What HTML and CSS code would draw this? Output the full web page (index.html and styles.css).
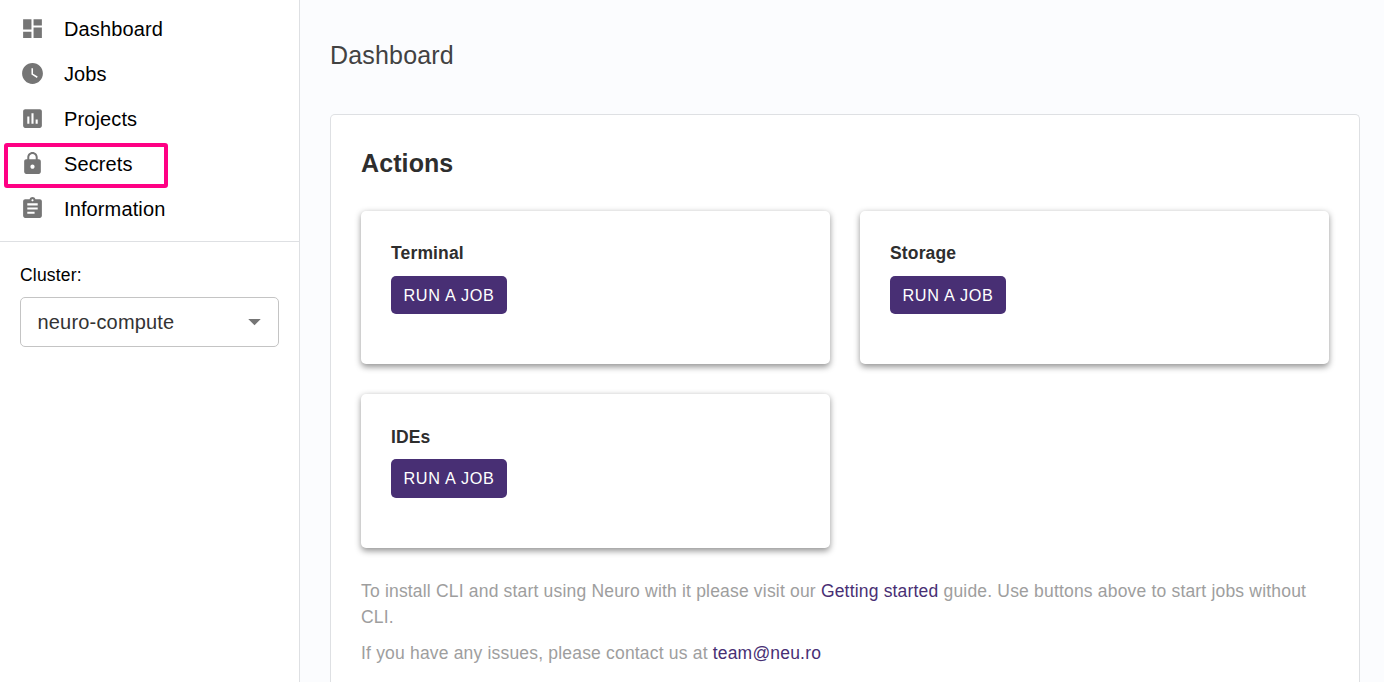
FILE: index.html
```html
<!DOCTYPE html>
<html lang="en">
<head>
<meta charset="utf-8">
<title>Dashboard</title>
<link rel="stylesheet" href="styles.css">
</head>
<body>
<div class="app">
  <aside class="sidebar">
    <nav class="nav">
      <a class="nav-item"><svg class="icon" viewBox="0 0 24 24"><path d="M3 13h8V3H3v10zm0 8h8v-6H3v6zm10 0h8V11h-8v10zm0-18v6h8V3h-8z"/></svg><span class="nav-text">Dashboard</span></a>
      <a class="nav-item"><svg class="icon" viewBox="0 0 24 24"><path d="M12 2C6.5 2 2 6.5 2 12s4.5 10 10 10 10-4.5 10-10S17.500 2 12 2zm4.200 14.200L11 13V7h1.500v5.200l4.500 2.700-.8 1.300z"/></svg><span class="nav-text">Jobs</span></a>
      <a class="nav-item"><svg class="icon" viewBox="0 0 24 24"><path d="M19 3H5c-1.100 0-2 .9-2 2v14c0 1.100.9 2 2 2h14c1.100 0 2-.9 2-2V5c0-1.100-.9-2-2-2zM9 17H7v-7h2v7zm4 0h-2V7h2v10zm4 0h-2v-4h2v4z"/></svg><span class="nav-text">Projects</span></a>
      <a class="nav-item highlighted"><svg class="icon" viewBox="0 0 24 24"><path d="M18 8h-1V6c0-2.760-2.240-5-5-5S7 3.240 7 6v2H6c-1.100 0-2 .9-2 2v10c0 1.100.9 2 2 2h12c1.100 0 2-.9 2-2V10c0-1.100-.9-2-2-2zm-6 9c-1.100 0-2-.9-2-2s.9-2 2-2 2 .9 2 2-.9 2-2 2zm3.100-9H8.900V6c0-1.710 1.390-3.100 3.100-3.100 1.710 0 3.100 1.390 3.100 3.100v2z"/></svg><span class="nav-text">Secrets</span></a>
      <a class="nav-item"><svg class="icon" viewBox="0 0 24 24"><path d="M19 3h-4.180C14.400 1.840 13.300 1 12 1c-1.300 0-2.400.84-2.820 2H5c-1.100 0-2 .9-2 2v14c0 1.100.9 2 2 2h14c1.100 0 2-.9 2-2V5c0-1.100-.9-2-2-2zm-7 0c.55 0 1 .45 1 1s-.45 1-1 1-1-.45-1-1 .45-1 1-1zm2 14H7v-2h7v2zm3-4H7v-2h10v2zm0-4H7V7h10v2z"/></svg><span class="nav-text">Information</span></a>
    </nav>
    <div class="cluster">
      <div class="cluster-label">Cluster:</div>
      <div class="select"><span class="select-value">neuro-compute</span><svg class="icon" viewBox="0 0 24 24"><path d="M6 9.500l6 6 6-6z"/></svg></div>
    </div>
  </aside>
  <main class="main">
    <h1 class="page-title">Dashboard</h1>
    <section class="panel">
      <h2 class="panel-title">Actions</h2>
      <div class="cards">
        <div class="card"><h3 class="card-title">Terminal</h3><button class="button">RUN A JOB</button></div>
        <div class="card"><h3 class="card-title">Storage</h3><button class="button">RUN A JOB</button></div>
        <div class="card"><h3 class="card-title">IDEs</h3><button class="button">RUN A JOB</button></div>
      </div>
      <p class="note">To install CLI and start using Neuro with it please visit our <a class="link">Getting started</a> guide. Use buttons above to start jobs without CLI.</p>
      <p class="note">If you have any issues, please contact us at <a class="link">team@neu.ro</a></p>
    </section>
  </main>
</div>
</body>
</html>
```
FILE: styles.css
```css
*, *::after { box-sizing: border-box; }
body {
  margin: 0;
  font-family: "Liberation Sans", Arial, sans-serif;
  color: #000;
}
h1, h2, h3, p { margin: 0; }
.app { display: flex; height: 682px; background: #fbfcfe; }
.sidebar { width: 300px; flex: none; background: #fff; border-right: 1px solid #dee0e3; }
.nav { padding: 6px 0 10px; border-bottom: 1px solid #dee0e3; }
.nav-item {
  position: relative;
  display: flex;
  align-items: center;
  gap: 19px;
  height: 45px;
  padding-left: 20px;
  font-size: 20px;
  letter-spacing: 0.120px;
}
.nav-text { padding-top: 2px; }
.icon { width: 25px; height: 25px; fill: #757575; flex: none; }
/* Callout frame around the highlighted entry */
.highlighted::after {
  content: "";
  position: absolute;
  left: 4px;
  top: 2px;
  width: 163.500px;
  height: 45px;
  border: 4px solid #ff0084;
  border-radius: 3px;
}
.cluster { padding: 20px; }
.cluster-label { font-size: 17.500px; line-height: 26px; margin-bottom: 9px; letter-spacing: 0.2px; }
.select {
  display: flex;
  align-items: center;
  justify-content: space-between;
  height: 50px;
  padding: 0 11px 1px 16.500px;
  border: 1px solid #c4c4c4;
  border-radius: 5px;
  font-size: 20px;
  letter-spacing: 0.180px;
  color: #333;
}
.select-value { padding-top: 2px; }
.main { flex: 1; display: flex; flex-direction: column; padding: 30px 24px 0 30px; }
.page-title { font-size: 25px; line-height: 50px; font-weight: 400; color: #424242; letter-spacing: 0.180px; margin-bottom: 34px; }
.panel {
  flex: 1;
  padding: 30px 30px 0;
  background: #fff;
  border: 1px solid #dee0e3;
  border-bottom: 0;
  border-radius: 5px 5px 0 0;
}
.panel-title { font-size: 25px; line-height: 36px; color: #2e2e2e; letter-spacing: 0.1px; margin-bottom: 29.750px; }
.cards { display: grid; grid-template-columns: 1fr 1fr; gap: 29.750px 30px; grid-auto-rows: 153.500px; }
.card {
  padding: 29.600px 30px;
  background: #fff;
  border-radius: 5px;
  box-shadow: 0 2.500px 6.250px rgba(0, 0, 0, 0.42);
}
.card-title { font-size: 17.500px; line-height: 26px; color: #2e2e2e; letter-spacing: 0.150px; margin-bottom: 9.650px; }
.button {
  display: block;
  width: 116px;
  height: 38.300px;
  padding: 0;
  border: 0;
  border-radius: 5px;
  background: #482f74;
  color: #fff;
  font: 16.250px/38px "Liberation Sans", Arial, sans-serif;
  letter-spacing: 0.700px;
}
.note { font-size: 17.500px; line-height: 26px; color: #9e9e9e; letter-spacing: 0.185px; margin-bottom: 10px; }
.cards + .note { margin-top: 30px; }
.link { color: #482f74; }
```
